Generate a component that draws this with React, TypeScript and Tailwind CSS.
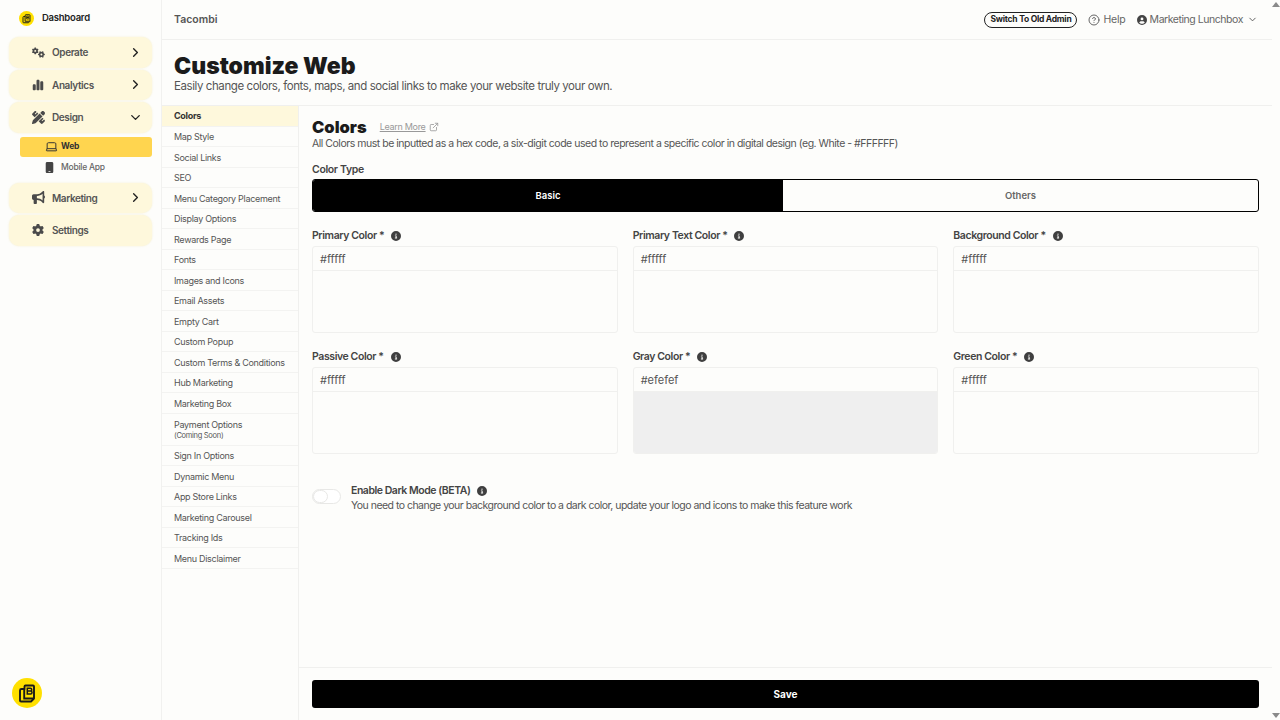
import { ChevronDown, ChevronRight, CircleHelp, ExternalLink, Laptop } from "lucide-react";
import { FaBullhorn, FaChartSimple, FaCircleInfo, FaCircleUser, FaGear, FaGears, FaMobile, FaPenRuler } from "react-icons/fa6";

const font = "font-['Inter',sans-serif]";

const subNav = [
  "Colors",
  "Map Style",
  "Social Links",
  "SEO",
  "Menu Category Placement",
  "Display Options",
  "Rewards Page",
  "Fonts",
  "Images and Icons",
  "Email Assets",
  "Empty Cart",
  "Custom Popup",
  "Custom Terms & Conditions",
  "Hub Marketing",
  "Marketing Box",
  "Payment Options",
  "Sign In Options",
  "Dynamic Menu",
  "App Store Links",
  "Marketing Carousel",
  "Tracking Ids",
  "Menu Disclaimer",
];

function LbLogo({ size }: { size: number }) {
  return (
    <svg width={size} height={size} viewBox="0 0 30 30">
      <circle cx="15" cy="15" r="15" fill="#ffe000" />
      <path d="M8 12.500a1.500 1.500 0 0 1 1.500-1.500h3v-2.500a1 1 0 0 1 1-1h7.500a1 1 0 0 1 1 1v12l-3 3h-10a1 1 0 0 1-1-1z" fill="none" stroke="#1a1a1a" strokeWidth="1.900" strokeLinejoin="round" />
      <path d="M12.200 11v9.500h9" fill="none" stroke="#1a1a1a" strokeWidth="1.900" />
      <path d="M15.300 10.200h3a1.400 1.400 0 0 1 0 2.900h-3zM15.300 13.100h3.300a1.400 1.400 0 0 1 0 2.900h-3.300z" fill="none" stroke="#1a1a1a" strokeWidth="1.500" />
    </svg>
  );
}

function NavCard({ icon, label, open, chevron = true }: { icon: React.ReactNode; label: string; open?: boolean; chevron?: boolean }) {
  return (
    <div className="flex h-[30.500px] items-center rounded-[10px] bg-[#fef8dc] pl-[23px] pr-[9px] shadow-[0_0_2px_rgba(240,230,180,0.6)]">
      <span className="flex w-[20px] shrink-0 text-[#4a4a4a]">{icon}</span>
      <span className="flex-1 pt-[1px] text-[10px] font-semibold tracking-[-0.4px] text-[#555]">{label}</span>
      {chevron &&
        (open ? (
          <ChevronDown size={15} strokeWidth={2.2} className="text-[#222]" />
        ) : (
          <ChevronRight size={15} strokeWidth={2.2} className="text-[#222]" />
        ))}
    </div>
  );
}

function ColorField({ label, value, fill }: { label: string; value: string; fill?: string }) {
  return (
    <div>
      <div className="flex h-[18px] items-center pt-[1px] text-[10.500px] font-semibold tracking-[-0.4px] text-[#444]">
        {label} *
        <FaCircleInfo size={10} className="ml-[7px] text-[#3f3f3f]" />
      </div>
      <div className="mt-[2px] flex h-[87px] flex-col overflow-hidden rounded-[3px] border border-[#f0f0ee]">
        <div className="flex h-[24px] shrink-0 items-center border-b border-[#f0f0ee] px-[7px] pt-[1px] text-[11px] text-[#555]">{value}</div>
        <div className={`flex-1 ${fill ?? ""}`} />
      </div>
    </div>
  );
}

export default function App() {
  return (
    <div className={`${font} flex h-[720px] w-[1280px] overflow-hidden bg-[#fdfdfb] text-[#222]`}>
      <aside className="flex w-[162px] shrink-0 flex-col border-r border-[#f1f1ef] pl-[9px] pr-[9px]">
        <div className="flex h-[37px] items-center pl-[10px]">
          <LbLogo size={15} />
          <span className="ml-[8px] text-[9.500px] font-semibold tracking-[-0.25px] text-[#222]">Dashboard</span>
        </div>
        <div className="flex flex-col gap-[2px]">
          <NavCard icon={<FaGears size={13} />} label="Operate" />
          <NavCard icon={<FaChartSimple size={12} />} label="Analytics" />
          <NavCard icon={<FaPenRuler size={13} />} label="Design" open />
        </div>
        <div className="mt-[4px] pl-[11px]">
          <div className="flex h-[20px] items-center rounded-[3px] bg-[#ffd54f] pl-[25px] text-[8.500px] font-bold tracking-[-0.2px] text-[#333]">
            <Laptop size={13} strokeWidth={1.800} className="mr-[3px] text-[#333]" />
            Web
          </div>
          <div className="flex h-[21px] items-center pl-[24px] text-[8.500px] font-medium tracking-[-0.25px] text-[#666]">
            <FaMobile size={11} className="mr-[6px] text-[#444]" />
            Mobile App
          </div>
        </div>
        <div className="mt-[5px] flex flex-col gap-[2px]">
          <NavCard icon={<FaBullhorn size={13} />} label="Marketing" />
          <NavCard icon={<FaGear size={12} />} label="Settings" chevron={false} />
        </div>
        <div className="mt-auto mb-[12px] ml-[3px]">
          <LbLogo size={30} />
        </div>
      </aside>

      <div className="flex min-w-0 flex-1 flex-col">
        <header className="flex h-[40px] shrink-0 items-center border-b border-[#f0f0ee] pl-[12px] pr-[14px]">
          <span className="flex-1 text-[10.500px] font-semibold text-[#555]">Tacombi</span>
          <button className="flex h-[16px] items-center rounded-full border border-[#222] px-[5px] text-[8.500px] font-bold tracking-[-0.25px] text-[#222]">
            Switch To Old Admin
          </button>
          <span className="ml-[11px] flex items-center gap-[3px] text-[10.500px] tracking-[-0.2px] text-[#666]">
            <CircleHelp size={12} />
            Help
          </span>
          <span className="ml-[11px] flex items-center gap-[3px] text-[10.500px] tracking-[-0.45px] text-[#666]">
            <FaCircleUser size={10} className="text-[#444]" />
            Marketing Lunchbox
          </span>
          <ChevronDown size={11} className="ml-[4px] text-[#555]" />
        </header>

        <div className="h-[66px] shrink-0 border-b border-[#f0f0ee] pl-[12px] pt-[13px]">
          <h1 className="text-[23px] leading-[26px] font-black text-[#1b1b1b]">Customize Web</h1>
          <p className="text-[11.500px] leading-[14px] tracking-[-0.42px] text-[#555]">Easily change colors, fonts, maps, and social links to make your website truly your own.</p>
        </div>

        <div className="flex min-h-0 flex-1">
          <nav className="w-[137px] shrink-0 border-r border-[#f0f0ee]">
            {subNav.map((item) => (
              <div
                key={item}
                className={`flex flex-col justify-center border-b border-[#f3f3f1] pl-[12px] text-[9px] tracking-[-0.3px] whitespace-nowrap ${
                  item === "Payment Options" ? "h-[32px]" : "h-[20.500px]"
                } ${item === "Colors" ? "bg-[#fef8dc] font-bold text-[#333]" : "pt-[1px] text-[#555]"}`}
              >
                {item}
                {item === "Payment Options" && <span className="text-[7.500px] leading-[10px]">(Coming Soon)</span>}
              </div>
            ))}
          </nav>

          <main className="flex min-w-0 flex-1 flex-col">
            <div className="flex-1 pl-[13px] pr-[13px] pt-[12px]">
              <div className="flex items-center">
                <h2 className="text-[16.500px] leading-[18px] font-black text-[#1b1b1b]">Colors</h2>
                <span className="ml-[13px] text-[9px] tracking-[-0.3px] text-[#999] underline">Learn More</span>
                <ExternalLink size={10} className="ml-[3px] text-[#999]" />
              </div>
              <p className="mt-[1px] text-[10.500px] leading-[14px] tracking-[-0.48px] text-[#555]">
                All Colors must be inputted as a hex code, a six-digit code used to represent a specific color in digital design (eg. White - #FFFFFF)
              </p>
              <div className="mt-[12px] text-[10.500px] leading-[14px] font-semibold tracking-[-0.35px] text-[#444]">Color Type</div>
              <div className="mt-[2px] flex h-[33px] overflow-hidden rounded-[3px] border border-black text-[9.500px] font-semibold">
                <div className="flex w-[470px] items-center justify-center bg-black pt-[1px] text-white">Basic</div>
                <div className="flex flex-1 items-center justify-center pt-[1px] text-[#666]">Others</div>
              </div>
              <div className="mt-[14px] grid grid-cols-3 gap-x-[15px] gap-y-[14px]">
                <ColorField label="Primary Color" value="#fffff" />
                <ColorField label="Primary Text Color" value="#fffff" />
                <ColorField label="Background Color" value="#fffff" />
                <ColorField label="Passive Color" value="#fffff" />
                <ColorField label="Gray Color" value="#efefef" fill="bg-[#efefef]" />
                <ColorField label="Green Color" value="#fffff" />
              </div>
              <div className="mt-[29px] flex">
                <div className="mt-[6px] h-[15px] w-[29px] rounded-full border border-[#e8e8e6] bg-white">
                  <div className="h-[13px] w-[15px] rounded-full border border-[#e8e8e6]" />
                </div>
                <div className="ml-[10px]">
                  <div className="flex items-center text-[10.500px] leading-[15px] font-semibold tracking-[-0.46px] text-[#444]">
                    Enable Dark Mode (BETA)
                    <FaCircleInfo size={10} className="ml-[7px] text-[#3f3f3f]" />
                  </div>
                  <div className="text-[10.500px] leading-[15px] tracking-[-0.52px] text-[#555]">
                    You need to change your background color to a dark color, update your logo and icons to make this feature work
                  </div>
                </div>
              </div>
            </div>
            <div className="flex h-[53px] shrink-0 items-start border-t border-[#f0f0ee] pl-[13px] pr-[13px] pt-[12px]">
              <button className="flex h-[28px] w-full items-center justify-center rounded-[3px] bg-black text-[10px] font-bold text-white">Save</button>
            </div>
          </main>
        </div>
      </div>

      <div className="flex w-[8px] shrink-0 flex-col items-center justify-between py-[2px]">
        <span className="h-0 w-0 border-x-[4px] border-b-[5px] border-x-transparent border-b-[#8a8a8a]" />
        <span className="h-0 w-0 border-x-[4px] border-t-[5px] border-x-transparent border-t-[#8a8a8a]" />
      </div>
    </div>
  );
}
